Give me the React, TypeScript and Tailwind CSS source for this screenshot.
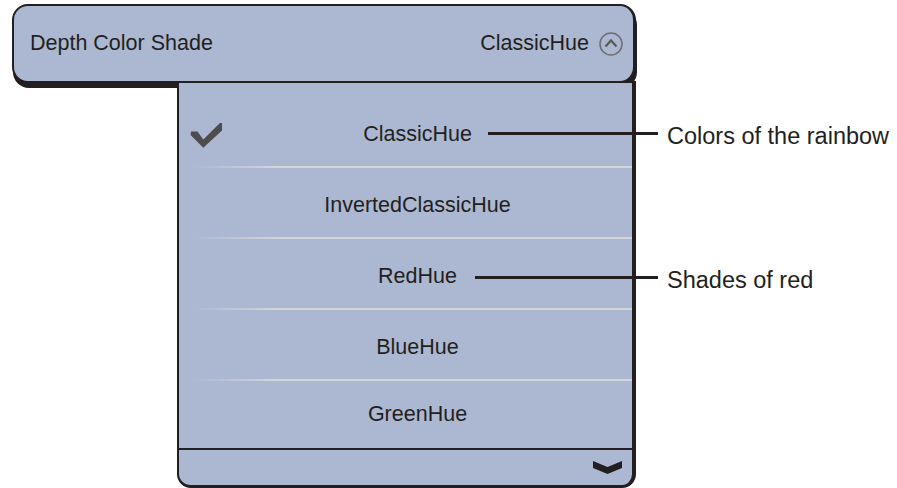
import React from "react";

const FILL = "bg-[#acb8d1]";

function Check() {
  return (
    <svg width="34" height="30" viewBox="188 120 34 30" className="absolute left-[9px] top-[23px]">
      <polygon
        points="191,131.5 197.5,131.5 203.3,139.5 220,123 222,123 222,130.5 203.3,147.8 190.6,135"
        fill="#4d4d4f"
      />
    </svg>
  );
}

function Sep() {
  return <div className="h-[2px] w-full bg-linear-to-r from-[#acb8d1] from-[3%] via-[#d4d5d7] via-[22%] to-[#d4d5d7]" />;
}

function Row({ label, check, last }: { label: string; check?: boolean; last?: boolean }) {
  return (
    <div className="relative">
      <div
        className={
          last
            ? "h-[67px] flex items-center justify-center pl-[24px]"
            : "h-[69px] flex items-center justify-center pl-[24px] pt-[5px]"
        }
      >
        {check && <Check />}
        <span>{label}</span>
      </div>
      {!last && <Sep />}
    </div>
  );
}

export default function App() {
  return (
    <div
      className="relative w-[897px] h-[488px] bg-white overflow-hidden text-[#231f20]"
      style={{ fontFamily: '"Liberation Sans", Arial, sans-serif' }}
    >
      <div className="pt-[4px] flex flex-col">
        {/* header */}
        <div
          className={`ml-[12px] w-[624px] h-[79px] rounded-[16px] border-2 border-r-[3px] border-[#231f20] ${FILL} shadow-[1px_5px_0_#231f20] flex items-center justify-between pl-[16px] pr-[10px] text-[21.5px]`}
        >
          <span>Depth Color Shade</span>
          <div className="flex items-center gap-[10px]">
            <span>ClassicHue</span>
            <svg width="24" height="24" viewBox="0 0 24 24">
              <circle cx="12" cy="12" r="11" fill="none" stroke="#6d6e71" strokeWidth="1.5" />
              <polyline points="6.5,14.5 12,8.5 17.5,14.5" fill="none" stroke="#58595b" strokeWidth="2.2" />
            </svg>
          </div>
        </div>

        {/* dropdown panel */}
        <div
          className={`relative z-10 ml-[177px] mt-[-2px] w-[459px] border-2 border-r-[4px] border-b-[3px] border-[#231f20] rounded-b-[14px] ${FILL} text-[21.5px] flex flex-col`}
        >
          <div className="h-[14px]" />
          <Row label="ClassicHue" check />
          <Row label="InvertedClassicHue" />
          <Row label="RedHue" />
          <Row label="BlueHue" />
          <Row label="GreenHue" last />
          <div className="h-[2px] bg-[#231f20]" />
          <div className="h-[35px] flex items-center justify-end pr-[10px]">
            <svg width="30" height="15" viewBox="592 461.5 30 15">
              <polygon points="593,462.5 607.5,468.5 622,462.5 622,469.5 607.5,475.5 593,469.5" fill="#231f20" />
            </svg>
          </div>
        </div>
      </div>

      {/* callouts */}
      <div className="absolute left-[488px] top-[132px] w-[170px] h-[2.5px] bg-[#231f20] z-20" />
      <div className="absolute left-[667px] top-[125px] text-[23.5px] leading-none whitespace-nowrap">
        Colors of the rainbow
      </div>
      <div className="absolute left-[475px] top-[276px] w-[183px] h-[2.5px] bg-[#231f20] z-20" />
      <div className="absolute left-[667px] top-[269px] text-[23.5px] leading-none whitespace-nowrap">
        Shades of red
      </div>
    </div>
  );
}
